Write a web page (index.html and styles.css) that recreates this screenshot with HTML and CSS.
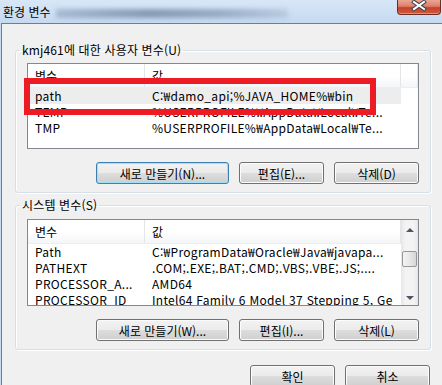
FILE: index.html
```html
<!DOCTYPE html>
<html lang="ko">
<head>
  <meta charset="UTF-8">
  <title>환경 변수</title>
  <link rel="stylesheet" href="styles.css">
</head>
<body>

<div class="window">
  <!-- 제목 표시줄 -->
  <div class="titlebar">
    <span class="title">환경 변수</span>
    <span class="smudge"></span>
    <span class="close">
      <svg width="44" height="15" viewBox="0 0 44 15">
        <path d="M17 2 L27 9 M27 2 L17 9" stroke="#3d4650" stroke-width="4" stroke-linecap="square"/>
        <path d="M17 2 L27 9 M27 2 L17 9" stroke="#ffffff" stroke-width="2" stroke-linecap="square"/>
      </svg>
    </span>
  </div>

  <div class="client">
    <!-- 사용자 변수 -->
    <fieldset class="group">
      <legend>kmj461에 대한 사용자 변수(U)</legend>
      <div class="list list-user">
        <div class="list-body">
          <div class="list-head">
            <div class="cell name">변수</div>
            <div class="cell value">값</div>
            <div class="cell rest"></div>
          </div>
          <div class="row selected">
            <div class="cell name">path</div>
            <div class="cell value">C:₩damo_api;%JAVA_HOME%₩bin</div>
          </div>
          <div class="row">
            <div class="cell name">TEMP</div>
            <div class="cell value">%USERPROFILE%₩AppData₩Local₩Te...</div>
          </div>
          <div class="row">
            <div class="cell name">TMP</div>
            <div class="cell value">%USERPROFILE%₩AppData₩Local₩Te...</div>
          </div>
        </div>
      </div>
      <div class="buttons">
        <button class="btn btn-wide focused">새로 만들기(N)...</button>
        <button class="btn">편집(E)...</button>
        <button class="btn">삭제(D)</button>
      </div>
    </fieldset>

    <!-- 시스템 변수 -->
    <fieldset class="group group-system">
      <legend>시스템 변수(S)</legend>
      <div class="list list-system">
        <div class="list-body">
          <div class="list-head">
            <div class="cell name">변수</div>
            <div class="cell value">값</div>
            <div class="cell rest"></div>
          </div>
          <div class="row">
            <div class="cell name">Path</div>
            <div class="cell value">C:₩ProgramData₩Oracle₩Java₩javapa...</div>
          </div>
          <div class="row">
            <div class="cell name">PATHEXT</div>
            <div class="cell value">.COM;.EXE;.BAT;.CMD;.VBS;.VBE;.JS;....</div>
          </div>
          <div class="row">
            <div class="cell name">PROCESSOR_A...</div>
            <div class="cell value">AMD64</div>
          </div>
          <div class="row">
            <div class="cell name">PROCESSOR_ID</div>
            <div class="cell value">Intel64 Family 6 Model 37 Stepping 5, Ge</div>
          </div>
        </div>
        <div class="scrollbar">
          <div class="arrow"><span class="tri-up"></span></div>
          <div class="thumb"></div>
          <div class="arrow arrow-down"><span class="tri-down"></span></div>
        </div>
      </div>
      <div class="buttons">
        <button class="btn btn-wide">새로 만들기(W)...</button>
        <button class="btn">편집(I)...</button>
        <button class="btn">삭제(L)</button>
      </div>
    </fieldset>

    <div class="footer">
      <button class="btn">확인</button>
      <button class="btn">취소</button>
    </div>
  </div>

  <!-- 빨간 표시 -->
  <div class="marker"></div>
</div>

</body>
</html>
```

FILE: styles.css
```css
body {
  margin: 0;
  font-family: "Noto Sans CJK KR", "Noto Sans", sans-serif;
  font-size: 12px;
  color: #000;
}
.window {
  position: relative;
  width: 442px;
  height: 385px;
  overflow: hidden;
  background: #c8dbf1;
}
.titlebar {
  height: 23px;
  display: flex;
  align-items: flex-start;
  background: linear-gradient(#d8e7f7, #c5d9f0);
}
.title {
  padding: 4px 0 0 3px;
  line-height: 16px;
}
.smudge {
  width: 232px;
  height: 9px;
  margin: 9px 0 0 5px;
  background: linear-gradient(90deg, rgba(100,120,150,0.35), rgba(80,100,130,0.55) 40%, rgba(90,110,140,0.45) 70%, rgba(110,130,160,0.2));
  filter: blur(2px);
}
.close {
  margin-left: auto;
  margin-right: 1px;
  width: 44px;
  height: 15px;
  box-sizing: border-box;
  border: 1px solid #6b2e24;
  border-top: none;
  border-radius: 0 0 4px 4px;
  background: linear-gradient(#eba695 0%, #dd7e68 45%, #c6412a 55%, #d05a3f 100%);
  box-shadow: inset 0 -1px 0 #e88c74;
}
.close svg {
  display: block;
  margin: 0 -1px;
}
.client {
  height: 361px;
  margin-left: 1px;
  border-left: 1px solid #6f7d8c;
  border-top: 1px solid #6f7d8c;
  background: #f0f0f0;
}
.group {
  margin: 19px 11px 0 13px;
  padding: 6px 11px 8px;
  border: 1px solid #d5dfe5;
  border-radius: 3px;
  box-shadow: inset 1px 1px 0 #fff, 1px 1px 0 #fff;
  min-width: 0;
}
.group legend {
  padding: 0 2px;
  margin-left: -7px;
  line-height: 14px;
  letter-spacing: 0.15px;
}
.group-system {
  margin-top: 5px;
}
.group-system .list {
  margin-top: 1px;
}
.list {
  display: flex;
  height: 86px;
  box-sizing: border-box;
  border: 1px solid #828790;
  background: #fff;
}
.list-system {
  height: 87px;
}
.list-body {
  flex: 1;
  min-width: 0;
  overflow: hidden;
}
.list-head {
  display: flex;
  height: 24px;
  box-sizing: border-box;
  border-bottom: 1px solid #eceef0;
  background: linear-gradient(#fff 0%, #fff 55%, #f4f5f7 100%);
}
.cell {
  flex: none;
  box-sizing: border-box;
  padding-left: 7px;
  white-space: nowrap;
  overflow: hidden;
}
.name {
  width: 117px;
}
.value {
  width: 256px;
}
.list-head .cell {
  line-height: 23px;
  border-right: 1px solid #e3e5e8;
}
.list-head .rest {
  flex: 1;
}
.row {
  display: flex;
  height: 16px;
  line-height: 16px;
  letter-spacing: 0.3px;
}
.row.selected .cell {
  background: #ededed;
}
.scrollbar {
  width: 17px;
  flex: none;
  display: flex;
  flex-direction: column;
  align-items: center;
  background: linear-gradient(90deg, #e6e6e6, #f3f3f3 25%, #f3f3f3 75%, #e6e6e6);
}
.arrow {
  height: 17px;
  width: 17px;
  display: flex;
  align-items: center;
  justify-content: center;
}
.arrow-down {
  margin-top: auto;
}
.tri-up {
  width: 0;
  height: 0;
  margin-top: 3px;
  border-left: 4px solid transparent;
  border-right: 4px solid transparent;
  border-bottom: 4px solid #4e5663;
}
.tri-down {
  width: 0;
  height: 0;
  margin-top: 2px;
  border-left: 4px solid transparent;
  border-right: 4px solid transparent;
  border-top: 4px solid #4e5663;
}
.thumb {
  width: 15px;
  height: 16px;
  margin-top: 14px;
  box-sizing: border-box;
  border: 1px solid #979797;
  border-radius: 2px;
  background: linear-gradient(90deg, #f4f4f4, #e8e8e8 50%, #d6d6d6);
}
.buttons {
  display: flex;
  justify-content: flex-end;
  gap: 10px;
  margin-top: 13px;
}
.btn {
  width: 85px;
  height: 22px;
  box-sizing: border-box;
  padding: 0;
  font: inherit;
  color: #000;
  border: 1px solid #707070;
  border-radius: 3px;
  background: linear-gradient(#f2f2f2 0%, #ebebeb 50%, #dddddd 51%, #cfcfcf 100%);
  box-shadow: inset 0 0 0 1px #fcfcfc;
}
.btn-wide {
  width: 133px;
}
.focused {
  border-color: #3c7fb1;
  box-shadow: inset 0 0 0 1px #9fe0f8;
}
.footer {
  display: flex;
  justify-content: flex-end;
  gap: 10px;
  margin-top: 15px;
  padding-right: 12px;
}
.marker {
  position: absolute;
  left: 24px;
  top: 78px;
  width: 352px;
  height: 37px;
  box-sizing: border-box;
  border: 6px solid #ed1c24;
}
```
